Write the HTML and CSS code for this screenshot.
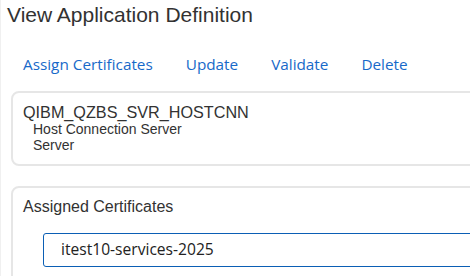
FILE: index.html
```html
<!DOCTYPE html>
<html>
<head>
<meta charset="utf-8">
<link rel="stylesheet" href="styles.css">
</head>
<body>
<div class="page">
  <h1 class="title">View Application Definition</h1>
  <nav class="toolbar">
    <a class="action">Assign Certificates</a>
    <a class="action">Update</a>
    <a class="action">Validate</a>
    <a class="action">Delete</a>
  </nav>
  <section class="card info">
    <div class="app-id">QIBM_QZBS_SVR_HOSTCNN</div>
    <div class="app-meta">Host Connection Server</div>
    <div class="app-meta">Server</div>
  </section>
  <section class="card certs">
    <div class="card-title">Assigned Certificates</div>
    <div class="cert-field">itest10-services-2025</div>
  </section>
</div>
</body>
</html>
```

FILE: styles.css
```css
html, body {
  margin: 0;
  padding: 0;
  background: #ffffff;
  overflow: hidden;
}
.page {
  width: 470px;
  height: 276px;
  overflow: hidden;
  box-sizing: border-box;
  border-left: 1px solid #f0f0f0;
  padding-left: 10px;
  font-family: "Liberation Sans", Arial, sans-serif;
  color: #323232;
}
.title {
  margin: 0 0 0 -4px;
  padding-top: 3px;
  font-size: 21px;
  font-weight: normal;
  line-height: 24px;
}
.toolbar {
  display: flex;
  gap: 33px;
  padding: 27px 0 0 12px;
  height: 26px;
}
.action {
  font-family: "Open Sans", sans-serif;
  font-size: 15.3px;
  color: #1769c9;
  line-height: 20px;
}
.card {
  border: 2px solid #e6e6e6;
  border-radius: 8px;
  width: 480px;
  box-sizing: border-box;
}
.info {
  margin-top: 11px;
  padding: 10px 10px 11px 10px;
}
.app-id {
  font-size: 16.2px;
  line-height: 18px;
}
.app-meta {
  font-size: 14px;
  line-height: 16px;
  padding-left: 10px;
}
.certs {
  margin-top: 20px;
  padding: 10px 10px 10px 10px;
  height: 100px;
}
.card-title {
  font-size: 16px;
  line-height: 18px;
}
.cert-field {
  margin: 17px 0 0 20px;
  height: 34px;
  box-sizing: border-box;
  border: 1.5px solid #0b5fb5;
  border-radius: 3px;
  padding-left: 17px;
  font-family: "Open Sans", sans-serif;
  font-size: 15.6px;
  line-height: 31px;
  color: #222;
}
```
